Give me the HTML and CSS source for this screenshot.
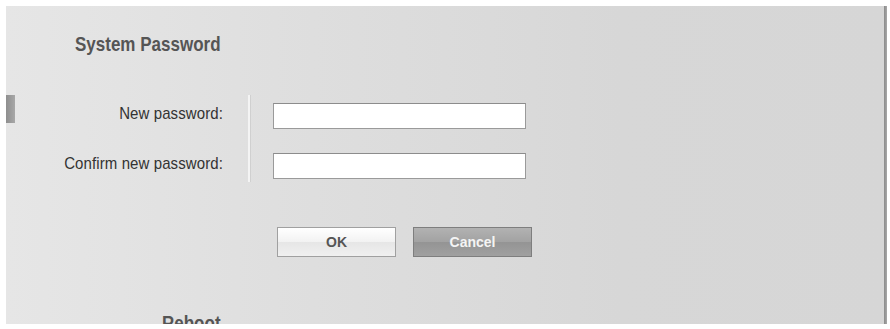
FILE: index.html
```html
<!DOCTYPE html>
<html>
<head>
<meta charset="utf-8">
<link rel="stylesheet" href="styles.css">
</head>
<body>
<div class="frame">
  <div class="panel">
    <div class="rail"><div class="marker"></div></div>
    <div class="content">
      <h2 class="title">System Password</h2>
      <div class="form">
        <div class="labels">
          <div class="label">New password:</div>
          <div class="label">Confirm new password:</div>
        </div>
        <div class="sep"></div>
        <div class="fields">
          <input class="field" type="password">
          <input class="field" type="password">
        </div>
      </div>
      <div class="actions">
        <button class="btn btn-ok">OK</button>
        <button class="btn btn-cancel">Cancel</button>
      </div>
      <h2 class="title title-reboot">Reboot</h2>
    </div>
  </div>
  <div class="edge"></div>
</div>
</body>
</html>
```
FILE: styles.css
```css
html, body {
  margin: 0;
  padding: 0;
  background: #ffffff;
}
body {
  font-family: "Liberation Sans", Arial, sans-serif;
}
.frame {
  display: flex;
  padding: 6px 0 0 6px;
  height: 318px;
}
.panel {
  width: 878px;
  height: 318px;
  overflow: hidden;
  display: flex;
  background: linear-gradient(to right, #e6e6e6 0%, #dedede 35%, #d7d7d7 70%, #d6d6d6 100%);
}
.edge {
  width: 3px;
  height: 318px;
  background: linear-gradient(to right, #8a8a8a, #a8a8a8);
}
.rail {
  width: 9px;
  flex: none;
}
.marker {
  margin-top: 89px;
  width: 9px;
  height: 28px;
  background: linear-gradient(to right, #8e8e8e, #a8a8a8);
}
.content {
  flex: 1;
  padding-left: 60px;
}
.title {
  margin: 27px 0 0 0;
  font-size: 17px;
  font-weight: bold;
  color: #555555;
  line-height: 22px;
  transform: scaleY(1.15);
  transform-origin: left top;
}
.form {
  display: flex;
  margin-top: 40px;
  margin-left: -60px;
}
.labels {
  width: 208px;
  display: flex;
  flex-direction: column;
  align-items: flex-end;
  padding-top: 8px;
  gap: 31px;
}
.label {
  font-size: 15px;
  line-height: 19px;
  color: #333333;
  transform: scaleY(1.12);
  letter-spacing: 0.1px;
}
.sep {
  width: 2px;
  height: 87px;
  margin-left: 25px;
  background: #f4f4f4;
  box-shadow: 1px 0 0 #d0d0d0;
}
.fields {
  display: flex;
  flex-direction: column;
  gap: 24px;
  margin-left: 23px;
  padding-top: 8px;
}
.field {
  box-sizing: border-box;
  width: 253px;
  height: 26px;
  margin: 0;
  border: 1px solid #9a9a9a;
  border-top-color: #8c8c8c;
  background: #ffffff;
}
.actions {
  display: flex;
  gap: 17px;
  margin-top: 45px;
  margin-left: 202px;
}
.btn {
  box-sizing: border-box;
  width: 119px;
  height: 30px;
  padding: 0;
  font-family: "Liberation Sans", Arial, sans-serif;
  font-size: 14px;
  font-weight: bold;
  cursor: pointer;
}
.btn-ok {
  border: 1px solid #a0a0a0;
  color: #555555;
  background: linear-gradient(to bottom, #ffffff 0%, #f2f2f2 50%, #e6e6e6 51%, #f0f0f0 100%);
}
.btn-cancel {
  border: 1px solid #7e7e7e;
  color: #f4f4f4;
  background: linear-gradient(to bottom, #b2b2b2 0%, #a2a2a2 50%, #949494 51%, #a0a0a0 100%);
}
.title-reboot {
  margin-top: 55px;
  margin-left: 87px;
}
```
